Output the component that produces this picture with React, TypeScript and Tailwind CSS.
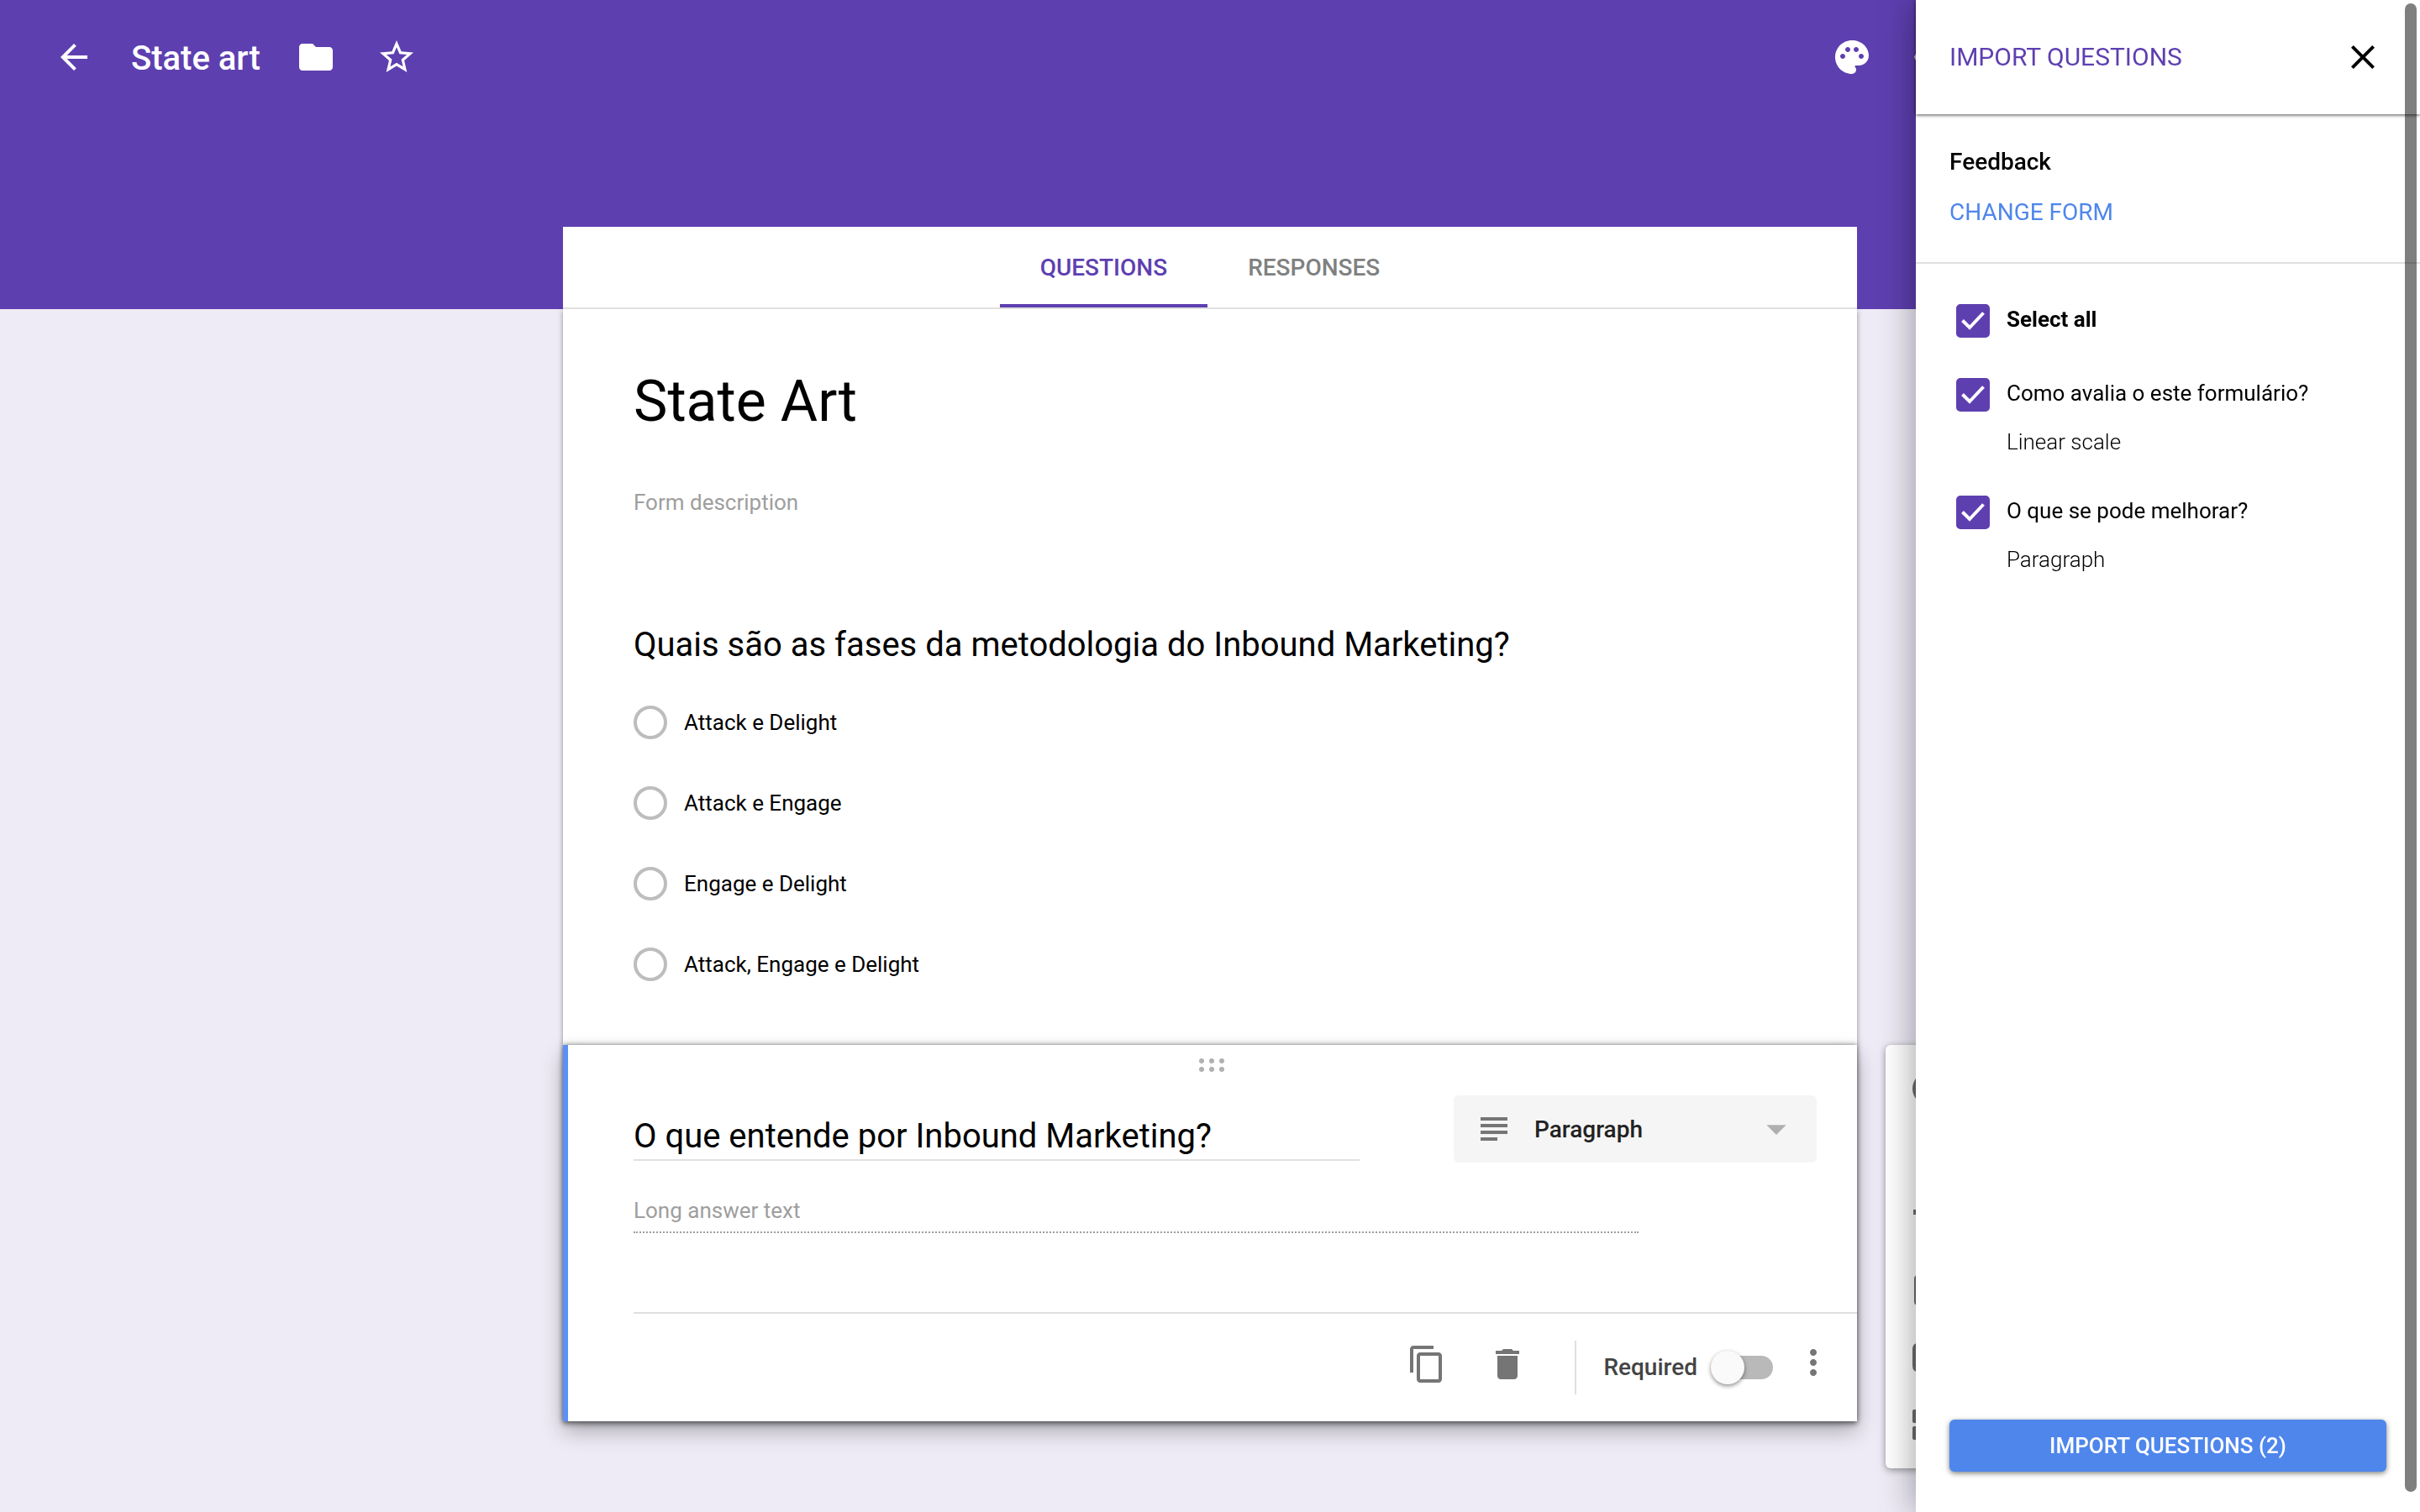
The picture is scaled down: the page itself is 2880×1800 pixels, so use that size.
import { useState } from "react";
import type { ReactNode } from "react";
import {
  MdArrowBack,
  MdArrowDropDown,
  MdClose,
  MdContentCopy,
  MdDelete,
  MdFolder,
  MdImage,
  MdMoreVert,
  MdNoteAdd,
  MdPalette,
  MdStarBorder,
  MdTextFields,
  MdVisibility,
} from "react-icons/md";

function IconButton({ label, children }: { label: string; children: ReactNode }) {
  return (
    <button type="button" aria-label={label} className="size-12 shrink-0 [&>svg]:size-12">
      {children}
    </button>
  );
}

function Header() {
  return (
    <header className="h-[368px] bg-[#5e3fb0] text-white">
      <div className="flex items-center px-16 pt-11">
        <IconButton label="Back">
          <MdArrowBack />
        </IconButton>
        <h1 className="mr-[42px] ml-11 pt-1 text-[40px] leading-11 font-medium">State art</h1>
        <div className="flex gap-12">
          <IconButton label="Move to folder">
            <MdFolder />
          </IconButton>
          <IconButton label="Star">
            <MdStarBorder />
          </IconButton>
        </div>
        <div className="mr-[492px] ml-auto flex gap-12">
          <IconButton label="Customize theme">
            <MdPalette />
          </IconButton>
          <IconButton label="Preview">
            <MdVisibility />
          </IconButton>
        </div>
      </div>
    </header>
  );
}

function Tabs() {
  return (
    <div role="tablist" className="flex h-[98px] justify-center border-b-2 border-[#e0e0e0] bg-white text-[28px] font-medium">
      <button type="button" role="tab" aria-selected="true" className="border-b-4 border-[#5e3fb0] px-12 pt-1.5 text-[#5e3fb0]">
        QUESTIONS
      </button>
      <button type="button" role="tab" aria-selected="false" className="border-b-4 border-transparent px-12 pt-1.5 text-[#808080]">
        RESPONSES
      </button>
    </div>
  );
}

const options = ["Attack e Delight", "Attack e Engage", "Engage e Delight", "Attack, Engage e Delight"];

function FormBody() {
  return (
    <section className="bg-white px-21 pt-[66px] pb-19 shadow-[0_2px_6px_rgba(0,0,0,0.4)]">
      <h2 className="text-[68px] leading-[88px]">State Art</h2>
      <p className="mt-14 text-[26px] leading-10 text-[#9e9e9e]">Form description</p>
      <fieldset className="mt-[122px]">
        <legend className="text-[40px] leading-14">Quais são as fases da metodologia do Inbound Marketing?</legend>
        <div className="mt-11 flex flex-col gap-14">
          {options.map((option) => (
            <label key={option} className="flex items-center gap-5 text-[26px] leading-10">
              <input type="radio" name="fases" className="size-10 appearance-none rounded-full border-4 border-[#bdbdbd]" />
              {option}
            </label>
          ))}
        </div>
      </fieldset>
    </section>
  );
}

function DragHandle() {
  return (
    <div className="mx-auto grid w-[30px] grid-cols-3 gap-x-1.5 gap-y-1">
      {[0, 1, 2, 3, 4, 5].map((dot) => (
        <span key={dot} className="size-1.5 rounded-full bg-[#b0b0b0]" />
      ))}
    </div>
  );
}

function QuestionEditor() {
  return (
    <section className="relative flex min-h-112 flex-col border-l-6 border-[#5a90f7] bg-white pt-4 pl-[78px] shadow-[0_4px_6px_rgba(0,0,0,0.3),0_0_6px_rgba(0,0,0,0.5),0_12px_24px_rgba(0,0,0,0.28)]">
      <div className="-ml-20">
        <DragHandle />
      </div>
      <div className="mt-7 flex items-start justify-between pr-12">
        <input
          aria-label="Question"
          defaultValue="O que entende por Inbound Marketing?"
          className="mt-4 h-[62px] w-[864px] border-b-2 border-[#e0e0e0] pt-1 text-[40px] outline-none"
        />
        <div className="relative flex h-20 w-[432px] items-center rounded-md bg-[#f5f5f5] text-[#222222]">
          <svg viewBox="0 0 32 28" className="ml-8 h-7 w-8 shrink-0 fill-[#757575]">
            <path d="M0 0h32v4H0zM0 8h32v4H0zM0 16h32v4H0zM0 24h20v4H0z" />
          </svg>
          <select aria-label="Question type" className="absolute inset-0 appearance-none pt-0.5 pl-24 text-[28px] font-medium outline-none">
            <option>Paragraph</option>
          </select>
          <MdArrowDropDown className="pointer-events-none mr-5 ml-auto size-14 text-[#afafaf]" />
        </div>
      </div>
      <input
        aria-label="Long answer text"
        placeholder="Long answer text"
        className="mt-9 h-12 w-[1196px] border-b-2 border-dotted border-[#9e9e9e] pb-1 text-[26px] outline-none placeholder:text-[#9e9e9e]"
      />
      <div className="mt-auto flex h-[130px] items-center justify-end border-t-2 border-[#e0e0e0] pr-7 text-[#757575]">
        <div className="flex gap-12 pb-2">
          <IconButton label="Duplicate">
            <MdContentCopy />
          </IconButton>
          <IconButton label="Delete">
            <MdDelete />
          </IconButton>
        </div>
        <span className="ml-14 h-16 w-0.5 bg-[#e0e0e0]" />
        <label className="ml-8 flex items-center gap-[18px] text-[28px] leading-10 font-medium text-[#444444]">
          Required
          <span className="relative flex h-7 w-[72px] items-center rounded-full bg-[#b9b9b9]">
            <input type="checkbox" role="switch" className="absolute inset-0 appearance-none" />
            <span className="pointer-events-none -ml-0.5 size-10 rounded-full bg-[#fafafa] shadow-[0_2px_5px_rgba(0,0,0,0.45)]" />
          </span>
        </label>
        <div className="ml-6 flex pb-3">
          <IconButton label="More options">
            <MdMoreVert />
          </IconButton>
        </div>
      </div>
    </section>
  );
}

function Toolbar() {
  return (
    <div className="absolute bottom-[-56px] left-full ml-[34px] flex w-26 flex-col items-center gap-8 rounded-md bg-white px-7 py-7 text-[#6e6e6e] shadow-[0_2px_8px_rgba(0,0,0,0.4)]">
      <IconButton label="Add question">
        <svg viewBox="0 0 24 24" fill="currentColor">
          <path d="M12 2a10 10 0 1 0 0 20 10 10 0 0 0 0-20zm5 11h-4v4h-2v-4H7v-2h4V7h2v4h4z" />
        </svg>
      </IconButton>
      <IconButton label="Import questions">
        <MdNoteAdd />
      </IconButton>
      <IconButton label="Add title and description">
        <MdTextFields />
      </IconButton>
      <IconButton label="Add image">
        <MdImage />
      </IconButton>
      <IconButton label="Add video">
        <svg viewBox="0 0 24 24" fill="currentColor">
          <path d="M5 3.500h14q3 0 3 4v9q0 4-3 4H5q-3 0-3-4v-9q0-4 3-4zM10 8.500v7l6-3.500z" />
        </svg>
      </IconButton>
      <IconButton label="Add section">
        <svg viewBox="0 0 24 24" fill="currentColor">
          <rect x="2" y="3" width="20" height="8" rx="1" />
          <rect x="2" y="13" width="20" height="8" rx="1" />
        </svg>
      </IconButton>
    </div>
  );
}

interface CheckRowProps {
  title: string;
  kind?: string;
  checked: boolean;
  onChange: () => void;
}

function CheckRow({ title, kind, checked, onChange }: CheckRowProps) {
  return (
    <label className="flex items-start gap-5 text-[26px] leading-9">
      <span className="relative size-10 shrink-0">
        <input
          type="checkbox"
          checked={checked}
          onChange={onChange}
          className="peer block size-10 appearance-none rounded-[5px] border-4 border-[#5e3fb0] checked:bg-[#5e3fb0]"
        />
        <svg viewBox="0 0 40 40" className="pointer-events-none absolute inset-0 hidden fill-none stroke-white stroke-[4] peer-checked:block">
          <path d="M7.500 19.500l8.500 8.500L32.500 10.500" />
        </svg>
      </span>
      <span className="flex flex-col gap-[22px]">
        <span className={kind ? "" : "font-bold"}>{title}</span>
        {kind && <span className="font-light">{kind}</span>}
      </span>
    </label>
  );
}

const questions = [
  { title: "Como avalia o este formulário?", kind: "Linear scale" },
  { title: "O que se pode melhorar?", kind: "Paragraph" },
];

function ImportPanel() {
  const [picked, setPicked] = useState([true, true]);
  const count = picked.filter(Boolean).length;
  const all = count === picked.length;

  return (
    <aside className="fixed inset-y-0 right-0 flex w-[600px] flex-col bg-white shadow-[0_0_40px_rgba(0,0,0,0.4)]">
      <div className="flex h-[136px] shrink-0 items-center justify-between bg-white pr-11 pl-10 shadow-[0_1px_4px_rgba(0,0,0,0.7)]">
        <h2 className="pb-0.5 text-[30px] text-[#5e3fb0]">IMPORT QUESTIONS</h2>
        <IconButton label="Close">
          <MdClose />
        </IconButton>
      </div>
      <div className="flex h-[178px] shrink-0 flex-col items-start gap-5 border-b-2 border-[#e0e0e0] px-10 pt-[37px] text-[28px] leading-10">
        <h3 className="font-medium">Feedback</h3>
        <button type="button" className="text-[#4f86ec]">
          CHANGE FORM
        </button>
      </div>
      <div className="flex flex-col px-12 pt-12">
        <CheckRow title="Select all" checked={all} onChange={() => setPicked(picked.map(() => !all))} />
        <div className="mt-12 flex flex-col gap-[46px]">
          {questions.map((question, i) => (
            <CheckRow
              key={question.title}
              title={question.title}
              kind={question.kind}
              checked={picked[i]}
              onChange={() => setPicked(picked.map((value, j) => (j === i ? !value : value)))}
            />
          ))}
        </div>
      </div>
      <button
        type="button"
        className="mx-10 mt-auto mb-12 h-[62px] rounded-md bg-[#4f86ec] text-[26px] font-medium text-white shadow-[0_2px_6px_rgba(0,0,0,0.5)]"
      >
        IMPORT QUESTIONS ({count})
      </button>
      <div className="absolute top-1 right-1 bottom-6 w-3.5 rounded-full bg-black/50" />
    </aside>
  );
}

export default function App() {
  return (
    <div className="min-h-screen overflow-hidden bg-[#eeebf6] font-['Roboto',sans-serif] text-black">
      <Header />
      <main className="relative mx-auto -mt-[98px] max-w-[1540px]">
        <div className="relative z-10">
          <Tabs />
        </div>
        <FormBody />
        <QuestionEditor />
        <Toolbar />
      </main>
      <ImportPanel />
    </div>
  );
}
